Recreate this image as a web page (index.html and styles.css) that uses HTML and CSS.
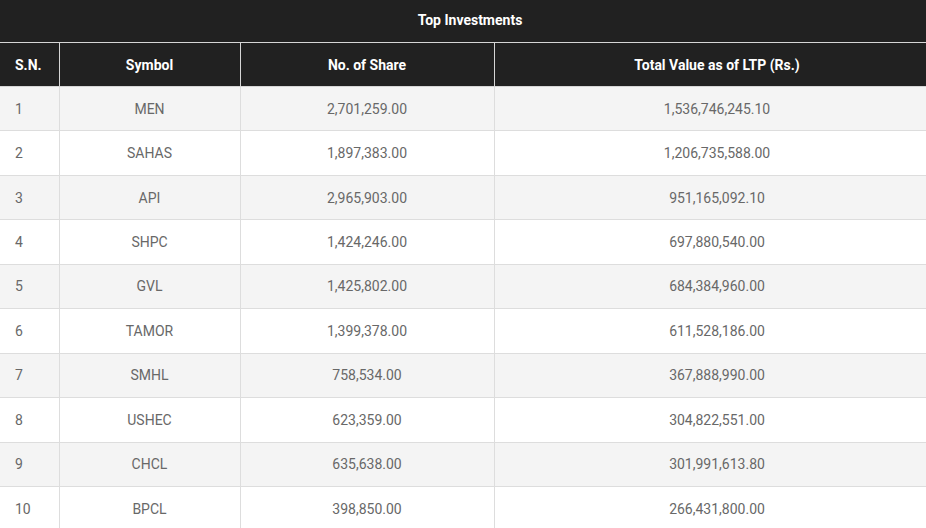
FILE: index.html
```html
<!DOCTYPE html>
<html>
<head>
<meta charset="utf-8">
<link rel="stylesheet" href="styles.css">
</head>
<body>
<table class="inv">
  <colgroup>
    <col class="c-sn">
    <col class="c-sym">
    <col class="c-shares">
    <col class="c-val">
  </colgroup>
  <thead>
    <tr class="title-row"><th colspan="4" class="title">Top Investments</th></tr>
    <tr class="head-row">
      <th class="sn">S.N.</th>
      <th>Symbol</th>
      <th>No. of Share</th>
      <th>Total Value as of LTP (Rs.)</th>
    </tr>
  </thead>
  <tbody>
    <tr><td class="sn">1</td><td>MEN</td><td>2,701,259.00</td><td>1,536,746,245.10</td></tr>
    <tr><td class="sn">2</td><td>SAHAS</td><td>1,897,383.00</td><td>1,206,735,588.00</td></tr>
    <tr><td class="sn">3</td><td>API</td><td>2,965,903.00</td><td>951,165,092.10</td></tr>
    <tr><td class="sn">4</td><td>SHPC</td><td>1,424,246.00</td><td>697,880,540.00</td></tr>
    <tr><td class="sn">5</td><td>GVL</td><td>1,425,802.00</td><td>684,384,960.00</td></tr>
    <tr><td class="sn">6</td><td>TAMOR</td><td>1,399,378.00</td><td>611,528,186.00</td></tr>
    <tr><td class="sn">7</td><td>SMHL</td><td>758,534.00</td><td>367,888,990.00</td></tr>
    <tr><td class="sn">8</td><td>USHEC</td><td>623,359.00</td><td>304,822,551.00</td></tr>
    <tr><td class="sn">9</td><td>CHCL</td><td>635,638.00</td><td>301,991,613.80</td></tr>
    <tr><td class="sn">10</td><td>BPCL</td><td>398,850.00</td><td>266,431,800.00</td></tr>
  </tbody>
</table>
</body>
</html>
```
FILE: styles.css
```css
html, body {
  margin: 0;
  padding: 0;
  background: #ffffff;
  overflow: hidden;
}
body {
  font-family: Roboto, "Liberation Sans", sans-serif;
}
.inv {
  width: 940px;
  border-collapse: collapse;
  table-layout: fixed;
  font-size: 14px;
}
.c-sn { width: 59px; }
.c-sym { width: 181px; }
.c-shares { width: 254px; }
.c-val { width: 446px; }
.inv th {
  background: #212121;
  color: #ffffff;
  font-weight: 700;
  padding: 0 15px;
  text-align: center;
  border: 1px solid #d6d6d6;
  border-top: none;
}
.title-row th {
  height: 40px;
  padding-bottom: 2px;
  font-size: 14px;
  border-left: none;
  border-right: none;
}
.head-row th {
  height: 43px;
}
.head-row th:first-child { border-left: none; }
.inv th.sn, .inv td.sn { text-align: left; }
.inv td {
  height: 43.44px;
  padding: 0 15px;
  color: #686868;
  text-align: center;
  border: 1px solid #dddddd;
}
.inv td:first-child { border-left: none; }
.inv tbody tr:nth-child(odd) td { background: #f4f4f4; }
.inv tbody tr:nth-child(even) td { background: #ffffff; }
```
